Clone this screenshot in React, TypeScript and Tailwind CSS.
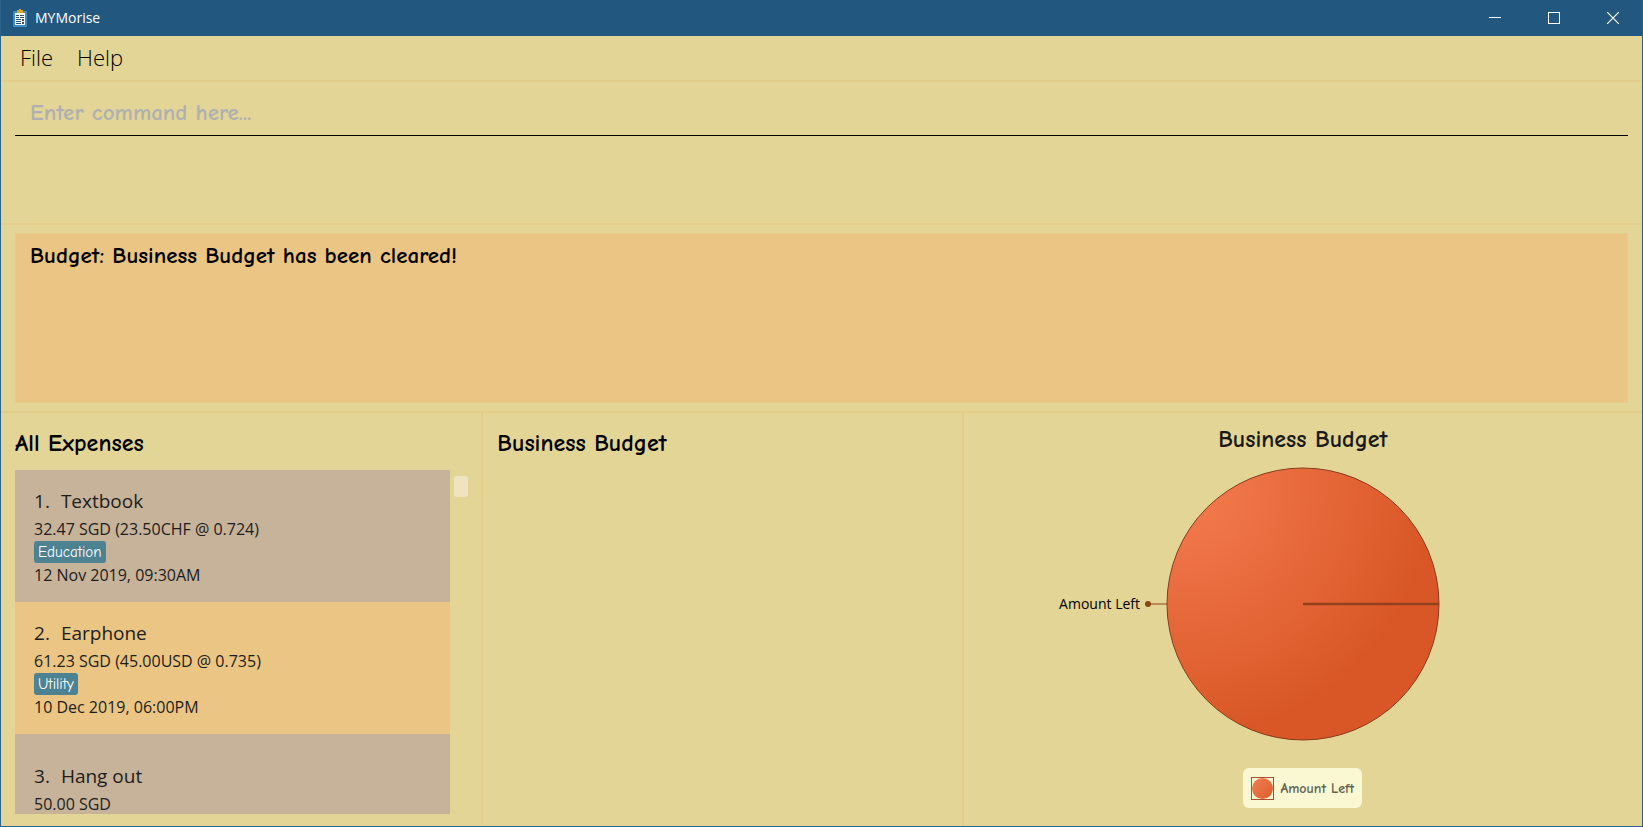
import React from "react";

type Expense = { name: string; amount: string; tag?: string; date?: string };

const expenses: Expense[] = [
  { name: "Textbook", amount: "32.47 SGD (23.50CHF @ 0.724)", tag: "Education", date: "12 Nov 2019, 09:30AM" },
  { name: "Earphone", amount: "61.23 SGD (45.00USD @ 0.735)", tag: "Utility", date: "10 Dec 2019, 06:00PM" },
  { name: "Hang out", amount: "50.00 SGD" },
];

const comic = "font-['Comic_Sans_MS','Comic_Neue','Noto_Sans',sans-serif]";

function AppIcon() {
  return (
    <svg width="14" height="18" viewBox="0 0 14 18" aria-hidden="true">
      <rect x="0" y="2" width="14" height="16" rx="1" fill="#3d8fc6" />
      <rect x="2" y="4" width="10" height="12" fill="#f4f7f9" />
      <path d="M4 1h2V0h2v1h2v3H4z" fill="#d9a521" />
      <path d="M3 6.5h3M7 6.5h4M3 8.5h3M3 10.5h5M3 12.5h5M3 14.5h5M7 8.5h4" stroke="#34516d" />
      <path d="M9 10h2v2H9zM9 13h2v2H9z" fill="#34516d" />
    </svg>
  );
}

function TitleBar() {
  const button = "flex w-[59px] items-center justify-center";
  return (
    <header className="flex h-9 shrink-0 items-stretch bg-[#22577f] pb-[1px] pl-3 text-white">
      <div className="flex flex-1 items-center gap-2">
        <AppIcon />
        <h1 className="text-[14px] leading-5">MYMorise</h1>
      </div>
      <button className={button} aria-label="Minimize">
        <svg width="12" height="12" viewBox="0 0 12 12"><path d="M0 5.5h12" stroke="#fff" /></svg>
      </button>
      <button className={button} aria-label="Maximize">
        <svg width="12" height="12" viewBox="0 0 12 12"><rect x=".5" y=".5" width="11" height="11" fill="none" stroke="#fff" /></svg>
      </button>
      <button className={button} aria-label="Close">
        <svg width="12" height="12" viewBox="0 0 12 12"><path d="M0 0l12 12M12 0L0 12" stroke="#fff" strokeWidth="1.2" /></svg>
      </button>
    </header>
  );
}

function ExpenseCard({ expense, index }: { expense: Expense; index: number }) {
  return (
    <li className="flex h-[132px] shrink-0 flex-col items-start justify-center px-[19px] text-[16px] leading-6 text-[#1d1d1d] odd:bg-[#c6b399] even:bg-[#ebc583]">
      <h3 className="flex gap-[11px] text-[19px] leading-8">
        <span>{index}.</span>
        <span>{expense.name}</span>
      </h3>
      <p>{expense.amount}</p>
      {expense.tag && (
        <span className={`${comic} rounded-[3px] bg-[#4d8292] px-1 text-[15px] leading-[22px] text-white`}>{expense.tag}</span>
      )}
      <p className="min-h-6">{expense.date}</p>
    </li>
  );
}

function PieChart() {
  return (
    <svg width="520" height="274" viewBox="0 0 520 274" role="img" aria-label="Amount Left">
      <defs>
        <radialGradient id="slice" gradientUnits="userSpaceOnUse" cx="140" cy="20" r="250">
          <stop offset="0" stopColor="#f57c51" />
          <stop offset="1" stopColor="#d95726" />
        </radialGradient>
      </defs>
      <circle cx="260" cy="137" r="136" fill="url(#slice)" stroke="#873c1d" />
      <path d="M260 137h136" stroke="#94401f" strokeWidth="2.5" />
      <path d="M105 137h19" stroke="#8b4513" />
      <circle cx="105" cy="137" r="3" fill="#8b4513" />
      <text x="97" y="142" textAnchor="end" fontSize="14" fill="#000">Amount Left</text>
    </svg>
  );
}

export default function App() {
  return (
    <div className="flex h-screen flex-col border-x border-b border-[#2d6289] bg-[#e2d596] font-['Segoe_UI','Open_Sans',sans-serif] text-black">
      <TitleBar />
      <nav className="flex h-[46px] shrink-0 items-center gap-6 border-b-2 border-[#e2ce8a] px-[19px] pb-[2px] text-[22px] font-light leading-8">
        <button>File</button>
        <button>Help</button>
      </nav>
      <section className={`${comic} h-[143px] shrink-0 border-b-2 border-[#e2ce8a] px-[14px] pt-2 text-[23px] font-bold`}>
        <input
          aria-label="Command"
          placeholder="Enter command here..."
          className="h-[46px] w-full border-b border-black bg-transparent px-[15px] leading-8 outline-none placeholder:text-[#b0b0b0]"
        />
      </section>
      <section className="h-[188px] shrink-0 border-b-2 border-[#e2ce8a] px-[14px] py-2">
        <output className={`${comic} block h-full border border-[#e2ce8a] bg-[#ebc583] px-[14px] py-[6px] text-[23px] font-bold leading-8`}>
          Budget: Business Budget has been cleared!
        </output>
      </section>
      <main className="grid min-h-0 flex-1 grid-cols-[241fr_240fr_339fr]">
        <section className="flex min-h-0 flex-col border-r-2 border-[#e2ce8a] pb-3 pl-[14px] pr-[13px]">
          <h2 className={`${comic} pb-[11px] pt-[14px] text-[24px] font-bold leading-8`}>All Expenses</h2>
          <div className="flex min-h-0 flex-1 gap-1">
            <ol className="flex min-w-0 flex-1 flex-col overflow-hidden">
              {expenses.map((e, i) => <ExpenseCard key={e.name} expense={e} index={i + 1} />)}
            </ol>
            <div className="w-[14px] pt-[6px]">
              <div className="h-[21px] rounded-[3px] bg-[#eee4bd]" />
            </div>
          </div>
        </section>
        <section className="border-r-2 border-[#e2ce8a] px-[14px] pt-[14px]">
          <h2 className={`${comic} text-[24px] font-bold leading-8`}>Business Budget</h2>
        </section>
        <section className="flex flex-col items-center pt-[10px]">
          <h2 className={`${comic} text-[24px] font-bold leading-8 text-[#1a1a1a]`}>Business Budget</h2>
          <div className="pt-3">
            <PieChart />
          </div>
          <div className={`${comic} mt-[27px] flex h-10 items-center gap-[6px] rounded-md bg-[#f9f8d2] px-2 text-[14px] font-bold text-[#636353]`}>
            <svg width="23" height="23" viewBox="0 0 23 23" aria-hidden="true">
              <defs>
                <linearGradient id="swatch" x1="0" y1="0" x2="1" y2="1">
                  <stop offset="0" stopColor="#f08055" />
                  <stop offset="1" stopColor="#dc5c2b" />
                </linearGradient>
              </defs>
              <rect x=".5" y=".5" width="22" height="22" fill="none" stroke="#a94f2d" />
              <circle cx="11.5" cy="11.5" r="10.5" fill="url(#swatch)" />
            </svg>
            <span>Amount Left</span>
          </div>
        </section>
      </main>
    </div>
  );
}
